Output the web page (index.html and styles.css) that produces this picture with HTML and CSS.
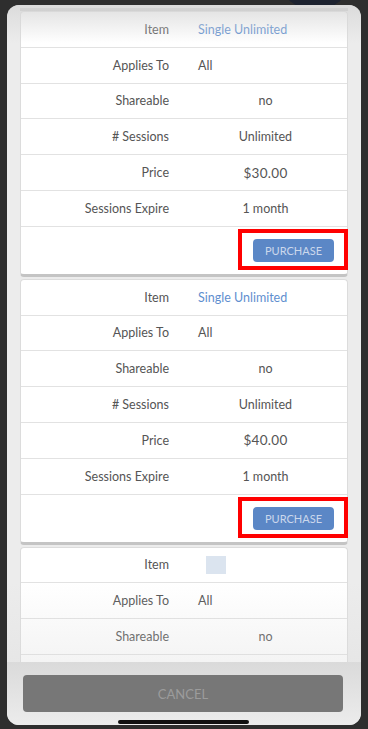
FILE: index.html
```html
<!DOCTYPE html>
<html lang="en">
<head>
    <meta charset="UTF-8">
    <meta name="viewport" content="width=device-width, initial-scale=1.0">
    <title>Purchase Package</title>
    <link rel="stylesheet" href="styles.css">
</head>
<body>

<div class="backdrop-blob"></div>

<div class="sheet">
    <div class="scroll">
        <div class="card-tail"></div>

        <div class="card">
            <div class="row"><span class="label">Item</span><span class="value link">Single Unlimited</span></div>
            <div class="row"><span class="label">Applies To</span><span class="value">All</span></div>
            <div class="row"><span class="label">Shareable</span><span class="value center">no</span></div>
            <div class="row"><span class="label"># Sessions</span><span class="value center">Unlimited</span></div>
            <div class="row"><span class="label">Price</span><span class="value center price">$30.00</span></div>
            <div class="row"><span class="label">Sessions Expire</span><span class="value center">1 month</span></div>
            <div class="action-row">
                <button class="purchase-btn">PURCHASE</button>
                <div class="highlight"></div>
            </div>
        </div>

        <div class="card">
            <div class="row"><span class="label">Item</span><span class="value link">Single Unlimited</span></div>
            <div class="row"><span class="label">Applies To</span><span class="value">All</span></div>
            <div class="row"><span class="label">Shareable</span><span class="value center">no</span></div>
            <div class="row"><span class="label"># Sessions</span><span class="value center">Unlimited</span></div>
            <div class="row"><span class="label">Price</span><span class="value center price">$40.00</span></div>
            <div class="row"><span class="label">Sessions Expire</span><span class="value center">1 month</span></div>
            <div class="action-row">
                <button class="purchase-btn">PURCHASE</button>
                <div class="highlight"></div>
            </div>
        </div>

        <div class="card">
            <div class="row"><span class="label">Item</span><span class="value"><span class="thumb"></span></span></div>
            <div class="row"><span class="label">Applies To</span><span class="value">All</span></div>
            <div class="row"><span class="label">Shareable</span><span class="value center">no</span></div>
            <div class="row"></div>
        </div>

        <div class="fade-top"></div>
        <div class="fade-bottom"></div>
    </div>

    <div class="footer">
        <button class="cancel-btn">CANCEL</button>
    </div>

    <div class="home-bar"></div>
</div>

</body>
</html>
```

FILE: styles.css
```css
body {
    font-family: Lato, "Open Sans", sans-serif;
    margin: 0;
    padding: 5px 7px 4px;
    background-color: #2e2e2e; /* dark backdrop behind the sheet */
    height: 729px;
    box-sizing: border-box;
    overflow: hidden;
    position: relative;
}
.backdrop-blob {
    position: absolute;
    top: -50px;
    left: 280px;
    width: 70px;
    height: 60px;
    border-radius: 50%;
    background-color: #1d2330;
}
.sheet {
    position: relative;
    height: 720px;
    border-radius: 12px;
    background-color: #ececec;
    overflow: hidden;
    display: flex;
    flex-direction: column;
}
.scroll {
    position: relative;
    flex: 1;
    overflow: hidden;
    padding: 3px 13px 0;
}
.card-tail {
    height: 3px;
    background-color: #c2c2c2;
}
/* one package */
.card {
    background-color: #ffffff;
    border: 1px solid #dcdcdc;
    border-bottom: 3px solid #c4c4c4;
    border-radius: 4px;
    margin-bottom: 2px;
}
.row {
    display: grid;
    grid-template-columns: 1fr 1fr;
    align-items: center;
    height: 35.8px;
    box-sizing: border-box;
    border-bottom: 1px solid #e2e2e2;
    font-size: 12.5px;
    color: #555555;
}
.label {
    text-align: right;
    padding-right: 15px;
}
.value {
    padding-left: 14px;
}
.value.center {
    text-align: center;
    padding-left: 0;
}
.price {
    font-size: 13.5px;
    letter-spacing: 0.3px;
}
.link {
    color: #5f8fcf;
}
.thumb {
    display: inline-block;
    width: 20px;
    height: 18px;
    margin-left: 8px;
    vertical-align: middle;
    background-color: #dbe4ef;
}
.action-row {
    position: relative;
    height: 47px;
    display: flex;
    align-items: center;
    justify-content: flex-end;
    padding-right: 13px;
}
.purchase-btn {
    width: 81px;
    height: 23px;
    border: none;
    border-radius: 4px;
    background-color: #5b87c6; /* blue action button */
    color: #cbd8ec;
    font-family: Lato, "Open Sans", sans-serif;
    font-size: 11px;
    padding: 0;
}
/* red annotation frame round the button */
.highlight {
    position: absolute;
    top: 2px;
    right: -1px;
    width: 110px;
    height: 41px;
    box-sizing: border-box;
    border: 4px solid #ff0000;
}
.fade-top {
    position: absolute;
    top: 0;
    left: 0;
    right: 0;
    height: 38px;
    background: linear-gradient(rgba(215, 215, 215, 0.8), rgba(255, 255, 255, 0));
}
.fade-bottom {
    position: absolute;
    bottom: 0;
    left: 0;
    right: 0;
    height: 80px;
    background: linear-gradient(rgba(225, 225, 225, 0), rgba(218, 218, 218, 0.3));
}
.footer {
    height: 63px;
    padding: 13px 18px 0 16px;
    box-sizing: border-box;
    background: linear-gradient(#dadada, #ececec);
}
.cancel-btn {
    width: 100%;
    height: 37px;
    border: none;
    border-radius: 4px;
    background-color: #777777;
    color: #9c9c9c;
    font-family: Lato, "Open Sans", sans-serif;
    font-size: 13px;
}
.home-bar {
    position: absolute;
    bottom: 1px;
    left: 111px;
    width: 131px;
    height: 4px;
    border-radius: 2px;
    background-color: #111111;
}
```
